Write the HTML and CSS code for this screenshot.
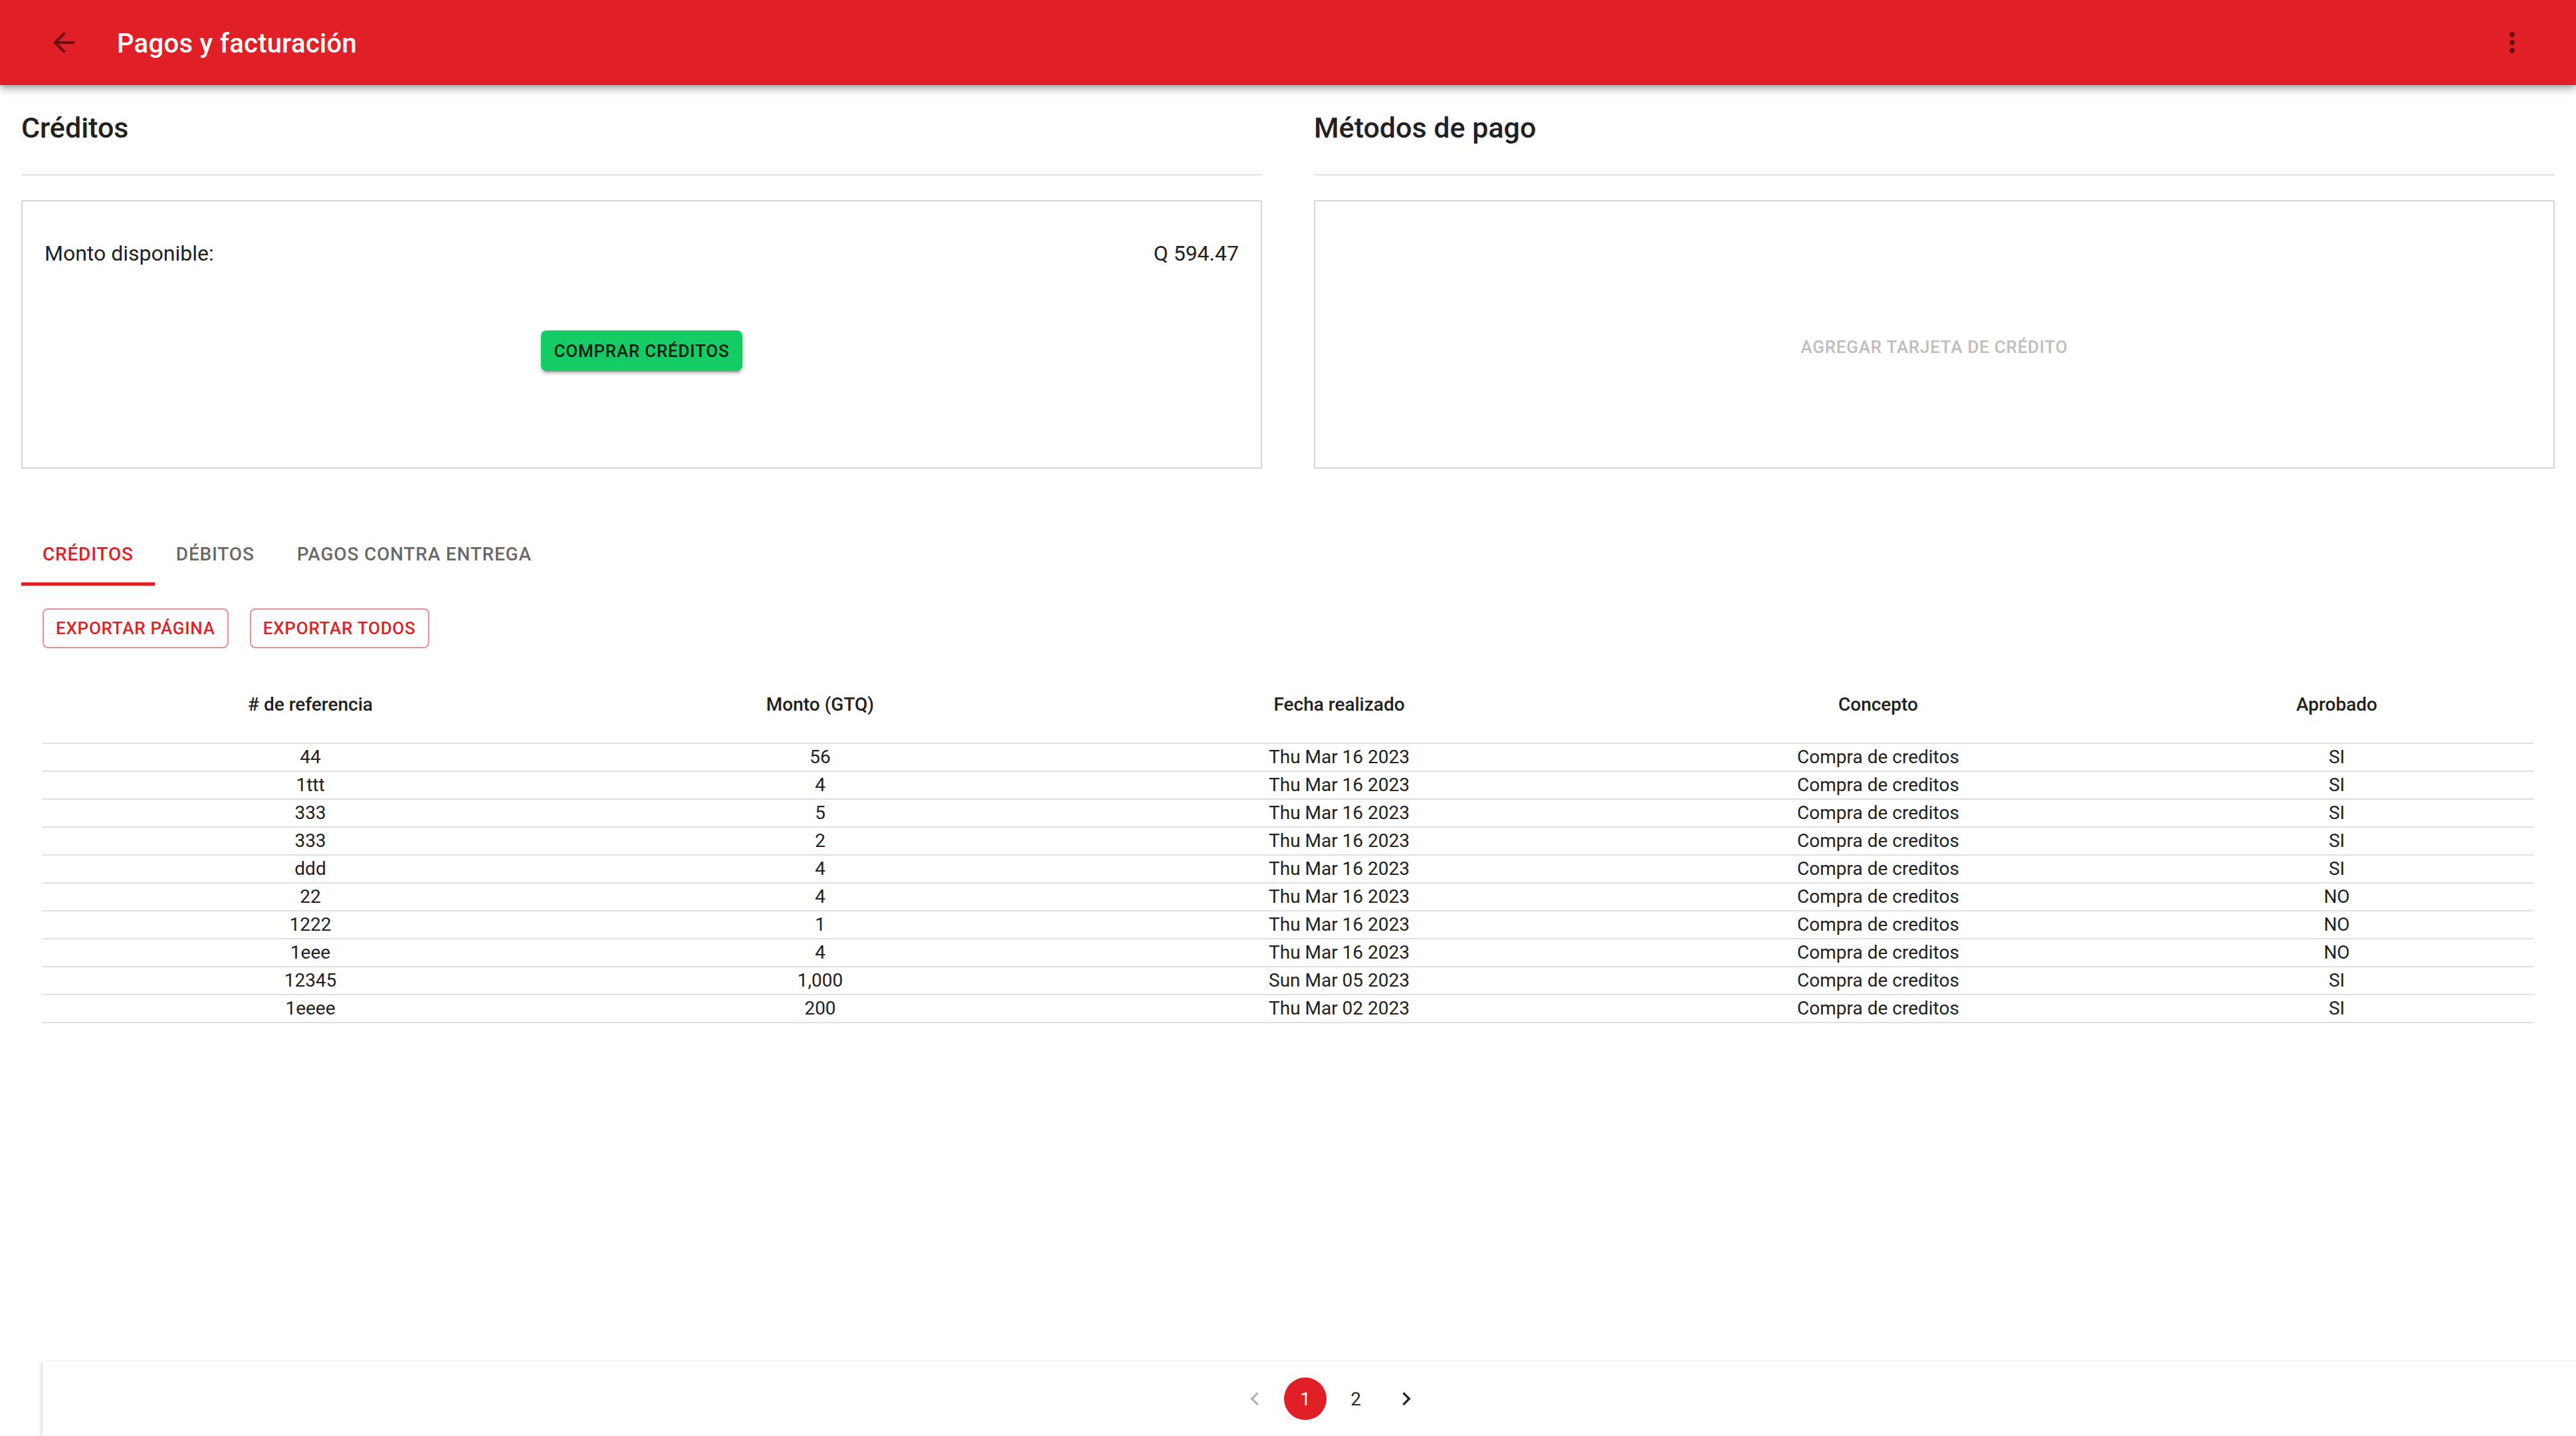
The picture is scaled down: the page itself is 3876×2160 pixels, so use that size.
FILE: index.html
```html
<!DOCTYPE html>
<html lang="es">
<head>
<meta charset="utf-8">
<title>Pagos y facturación</title>
<link rel="stylesheet" href="styles.css">
</head>
<body>
<header class="appbar">
  <button class="icon-btn back" aria-label="Atrás">
    <svg viewBox="0 0 24 24" class="icon"><path d="M20 11H7.83l5.59-5.59L12 4l-8 8 8 8 1.41-1.41L7.83 13H20v-2z"/></svg>
  </button>
  <h1 class="title">Pagos y facturación</h1>
  <span class="spacer"></span>
  <button class="icon-btn more" aria-label="Más">
    <svg viewBox="0 0 24 24" class="icon"><path d="M12 8c1.1 0 2-.9 2-2s-.9-2-2-2-2 .9-2 2 .9 2 2 2zm0 2c-1.1 0-2 .9-2 2s.9 2 2 2 2-.9 2-2-.9-2-2-2zm0 6c-1.1 0-2 .9-2 2s.9 2 2 2 2-.9 2-2-.9-2-2-2z"/></svg>
  </button>
</header>

<main class="content">
  <section class="top-grid">
    <div class="col">
      <h2 class="section-title">Créditos</h2>
      <hr class="divider">
      <div class="card credit-card">
        <div class="balance-row">
          <span>Monto disponible:</span>
          <span>Q 594.47</span>
        </div>
        <div class="buy-row">
          <button class="btn-green">Comprar créditos</button>
        </div>
      </div>
    </div>
    <div class="col">
      <h2 class="section-title">Métodos de pago</h2>
      <hr class="divider">
      <div class="card method-card">
        <span class="add-card">Agregar tarjeta de crédito</span>
      </div>
    </div>
  </section>

  <nav class="tabs">
    <button class="tab active">Créditos</button>
    <button class="tab">Débitos</button>
    <button class="tab">Pagos contra entrega</button>
  </nav>

  <section class="panel">
    <div class="export-row">
      <button class="btn-outline">Exportar página</button>
      <button class="btn-outline">Exportar todos</button>
    </div>
    <table class="data-table">
      <colgroup>
        <col class="c1"><col class="c2"><col class="c3"><col class="c4"><col class="c5">
      </colgroup>
      <thead>
        <tr><th># de referencia</th><th>Monto (GTQ)</th><th>Fecha realizado</th><th>Concepto</th><th>Aprobado</th></tr>
      </thead>
      <tbody>
        <tr><td>44</td><td>56</td><td>Thu Mar 16 2023</td><td>Compra de creditos</td><td>SI</td></tr>
        <tr><td>1ttt</td><td>4</td><td>Thu Mar 16 2023</td><td>Compra de creditos</td><td>SI</td></tr>
        <tr><td>333</td><td>5</td><td>Thu Mar 16 2023</td><td>Compra de creditos</td><td>SI</td></tr>
        <tr><td>333</td><td>2</td><td>Thu Mar 16 2023</td><td>Compra de creditos</td><td>SI</td></tr>
        <tr><td>ddd</td><td>4</td><td>Thu Mar 16 2023</td><td>Compra de creditos</td><td>SI</td></tr>
        <tr><td>22</td><td>4</td><td>Thu Mar 16 2023</td><td>Compra de creditos</td><td>NO</td></tr>
        <tr><td>1222</td><td>1</td><td>Thu Mar 16 2023</td><td>Compra de creditos</td><td>NO</td></tr>
        <tr><td>1eee</td><td>4</td><td>Thu Mar 16 2023</td><td>Compra de creditos</td><td>NO</td></tr>
        <tr><td>12345</td><td>1,000</td><td>Sun Mar 05 2023</td><td>Compra de creditos</td><td>SI</td></tr>
        <tr><td>1eeee</td><td>200</td><td>Thu Mar 02 2023</td><td>Compra de creditos</td><td>SI</td></tr>
      </tbody>
    </table>
  </section>
</main>

<footer class="pager-bar">
  <ul class="pager">
    <li><button class="page-btn nav disabled" aria-label="Anterior"><svg viewBox="0 0 24 24" class="chev"><path d="M15.41 7.41 14 6l-6 6 6 6 1.41-1.41L10.83 12z"/></svg></button></li>
    <li><button class="page-btn selected">1</button></li>
    <li><button class="page-btn">2</button></li>
    <li><button class="page-btn nav" aria-label="Siguiente"><svg viewBox="0 0 24 24" class="chev"><path d="M10 6 8.59 7.41 13.17 12l-4.58 4.59L10 18l6-6z"/></svg></button></li>
  </ul>
</footer>
</body>
</html>
```

FILE: styles.css
```css
* { box-sizing: border-box; }

html, body {
  margin: 0;
  padding: 0;
}

body {
  font-family: Roboto, "Noto Sans", "Liberation Sans", sans-serif;
  color: #212121;
  background: #ffffff;
  width: 3876px;
  min-height: 2160px;
  overflow: hidden;
  display: flex;
  flex-direction: column;
}

button {
  font-family: inherit;
  border: none;
  background: none;
  padding: 0;
  margin: 0;
  cursor: pointer;
}

/* ---------- App bar ---------- */
.appbar {
  position: relative;
  z-index: 2;
  height: 128px;
  flex: none;
  display: flex;
  align-items: center;
  padding: 0 48px;
  background: #e01f27;
  box-shadow: 0 4px 8px -2px rgba(0,0,0,0.2), 0 8px 10px 0 rgba(0,0,0,0.14), 0 2px 20px 0 rgba(0,0,0,0.12);
}

.icon-btn {
  width: 96px;
  height: 96px;
  padding: 24px;
  display: flex;
  align-items: center;
  justify-content: center;
  border-radius: 50%;
}

.icon-btn .icon {
  width: 48px;
  height: 48px;
  fill: rgba(0,0,0,0.54);
}

.back { margin-right: 32px; }

.title {
  margin: 0;
  padding-top: 3px;
  font-size: 40px;
  line-height: 1.6;
  font-weight: 500;
  letter-spacing: 0.3px;
  color: #ffffff;
}

.spacer { flex: 1; }

/* ---------- Content ---------- */
.content {
  padding: 0 32px;
  flex: none;
}

.top-grid {
  display: grid;
  grid-template-columns: 1fr 1fr;
  column-gap: 78px;
  padding-top: 42px;
}

.section-title {
  margin: 0;
  font-size: 43px;
  line-height: 44px;
  font-weight: 500;
  color: #212121;
}

.divider {
  margin: 48px 0 0;
  border: none;
  height: 2px;
  background: #e0e0e0;
}

.card {
  margin-top: 37px;
  height: 404px;
  border: 2px solid #d6d6d6;
  background: #fff;
}

.credit-card {
  padding: 54px 33px 0;
}

.balance-row {
  display: flex;
  justify-content: space-between;
  font-size: 32px;
  line-height: 48px;
  color: #212121;
}

.buy-row {
  display: flex;
  justify-content: center;
  margin-top: 92px;
}

.btn-green {
  height: 61px;
  padding: 0 20px;
  background: #14cc64;
  color: rgba(0,0,0,0.87);
  font-size: 26px;
  font-weight: 500;
  letter-spacing: 0.75px;
  text-transform: uppercase;
  border-radius: 8px;
  box-shadow: 0 6px 2px -4px rgba(0,0,0,0.2), 0 4px 4px 0 rgba(0,0,0,0.14), 0 2px 10px 0 rgba(0,0,0,0.12);
}

.method-card {
  display: flex;
  align-items: center;
  justify-content: center;
  padding-top: 38px;
}

.add-card {
  font-size: 26px;
  font-weight: 500;
  letter-spacing: 0.75px;
  text-transform: uppercase;
  color: #bdbdbd;
}

/* ---------- Tabs ---------- */
.tabs {
  display: flex;
  margin-top: 80px;
  height: 96px;
}

.tab {
  position: relative;
  min-width: 180px;
  height: 96px;
  padding: 0 32px;
  font-size: 28px;
  font-weight: 500;
  letter-spacing: 0.8px;
  text-transform: uppercase;
  color: rgba(0,0,0,0.6);
}

.tab.active { color: #e01f27; }

.tab.active::after {
  content: "";
  position: absolute;
  left: 0;
  right: 0;
  bottom: 0;
  height: 5px;
  background: #e01f27;
}

/* ---------- Panel ---------- */
.panel {
  padding: 0 32px;
}

.export-row {
  display: flex;
  gap: 32px;
  margin-top: 34px;
}

.btn-outline {
  height: 60px;
  padding: 0 18px;
  border: 2px solid rgba(224,31,39,0.5);
  border-radius: 8px;
  color: #e01f27;
  font-size: 26px;
  font-weight: 500;
  letter-spacing: 0.75px;
  text-transform: uppercase;
}

.data-table {
  margin-top: 28px;
  width: 3748px;
  table-layout: fixed;
  border-collapse: collapse;
  font-size: 28px;
}

.c1 { width: 806px; }
.c2 { width: 728px; }
.c3 { width: 834px; }
.c4 { width: 788px; }
.c5 { width: 592px; }

.data-table th {
  padding: 36px 0;
  line-height: 42px;
  font-weight: 500;
  color: #212121;
  text-align: center;
  border-bottom: 2px solid #e0e0e0;
}

.data-table td {
  height: 42px;
  padding: 0;
  line-height: 40px;
  text-align: center;
  color: #212121;
  border-bottom: 2px solid #e0e0e0;
}

/* ---------- Pagination bar ---------- */
.pager-bar {
  margin-top: auto;
  margin-left: 64px;
  width: 3876px;
  height: 112px;
  flex: none;
  background: #fff;
  box-shadow: 0 2px 2px -2px rgba(0,0,0,0.2), -2px 2px 6px 0 rgba(0,0,0,0.14), 0 -1px 4px 0 rgba(0,0,0,0.05);
  padding-top: 24px;
}

.pager {
  list-style: none;
  margin: 0;
  padding: 0;
  display: flex;
  justify-content: center;
}

.page-btn {
  width: 64px;
  height: 64px;
  margin: 0 6px;
  border-radius: 50%;
  font-size: 28px;
  color: rgba(0,0,0,0.87);
  display: flex;
  align-items: center;
  justify-content: center;
}

.page-btn.selected {
  background: #e01f27;
  color: #fff;
}

.chev {
  width: 40px;
  height: 40px;
  fill: rgba(0,0,0,0.87);
}

.page-btn.disabled .chev { fill: rgba(0,0,0,0.3); }
```
